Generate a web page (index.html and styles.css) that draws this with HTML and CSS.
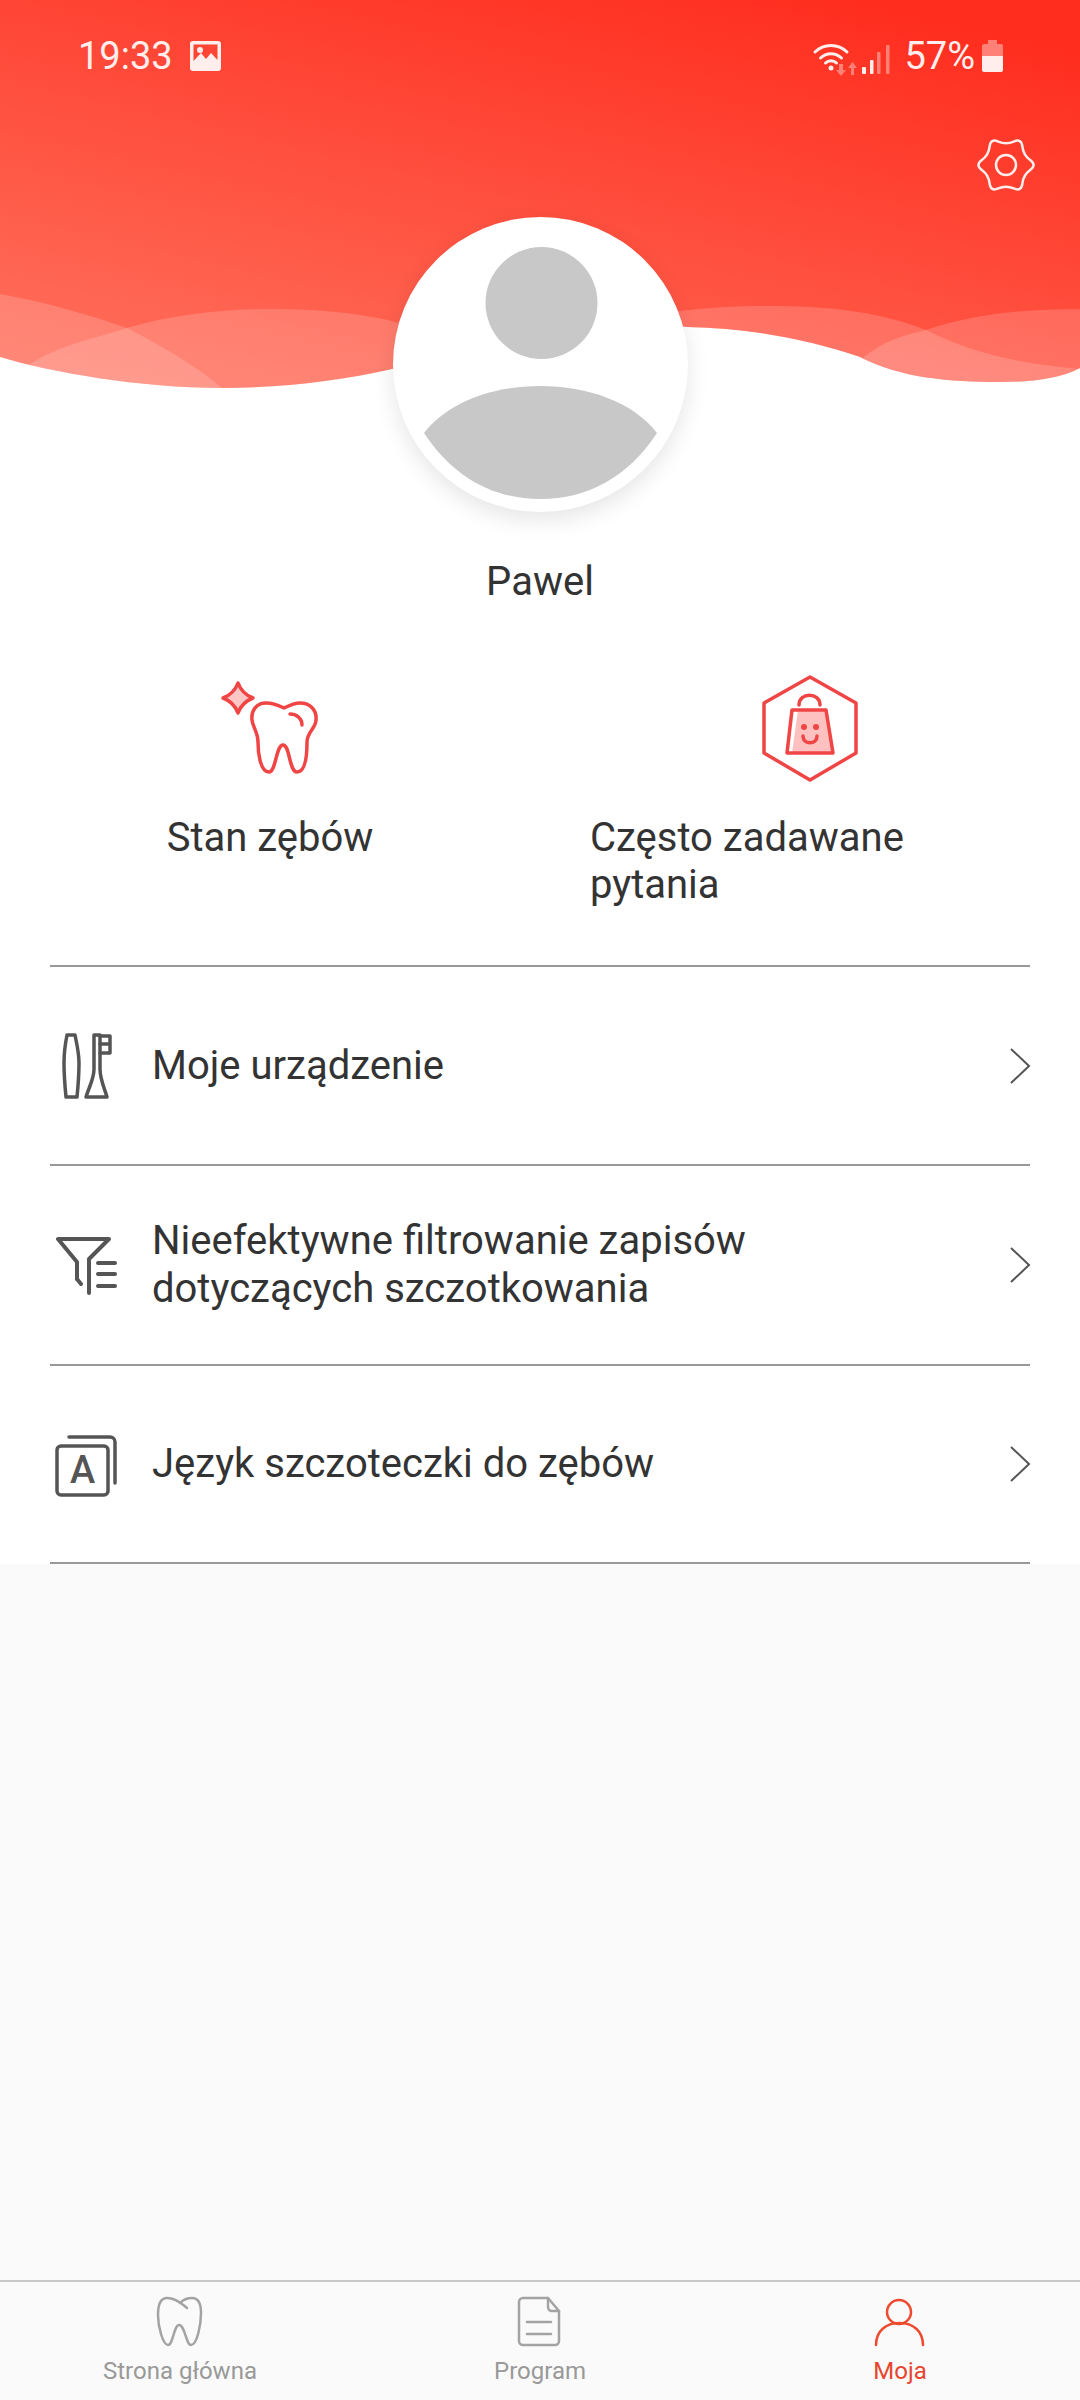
FILE: index.html
```html
<!DOCTYPE html>
<html lang="pl">
<head>
<meta charset="utf-8">
<title>Moja</title>
<link rel="stylesheet" href="styles.css">
</head>
<body>
<div class="screen">
  <main class="main">
    <section class="hero">
      <svg class="hero-bg" viewBox="0 0 1080 420" width="1080" height="420" aria-hidden="true">
        <defs>
          <linearGradient id="heroGrad" gradientUnits="userSpaceOnUse" x1="860" y1="0" x2="738" y2="526">
            <stop offset="0" stop-color="#ff2d1e"/>
            <stop offset="1" stop-color="#ff6f5c"/>
          </linearGradient>
          <clipPath id="heroClip">
            <path d="M0 0H1080V368C1060 379 1030 382 1000 382C950 382 900 378 860 357C810 340 750 328 687 327C600 315 480 350 392 369C340 381 280 388 222 388C140 388 50 372 0 357Z"/>
          </clipPath>
        </defs>
        <g clip-path="url(#heroClip)">
          <rect class="hero-fill" width="1080" height="420"/>
          <path class="band" d="M0 294C45 302 90 315 127 328C160 345 195 365 222 388V420H0Z"/>
          <path class="band" d="M0 380L32 363C60 345 90 340 127 328C170 315 220 309 270 309C320 309 360 313 395 322C480 345 600 312 680 311C710 307 740 306 771 306C830 306 880 312 926 330C975 355 1030 365 1080 369V420H0Z"/>
          <path class="band" d="M864 357C885 340 905 335 926 330C970 315 1020 309 1080 309V420H864Z"/>
        </g>
      </svg>

      <div class="status">
        <div class="status-left">
          <span class="clock">19:33</span>
          <svg class="st-pic" viewBox="0 0 31 30" width="31" height="30">
            <path class="st-fill" fill-rule="evenodd" d="M3 0H28A3 3 0 0 1 31 3V27A3 3 0 0 1 28 30H3A3 3 0 0 1 0 27V3A3 3 0 0 1 3 0ZM3.500 3.500V20L11 12L16 18L21 12L27.500 19V3.500Z"/>
            <circle class="st-fill" cx="10" cy="9" r="3"/>
          </svg>
        </div>
        <div class="status-right">
          <svg class="st-wifi" viewBox="0 0 50 36" width="50" height="36">
            <path class="wifi-arc" d="M3 11A23 23 0 0 1 35 11"/>
            <path class="wifi-arc" d="M8.500 17A15 15 0 0 1 29.500 17"/>
            <path class="wifi-arc" d="M13.500 22A8 8 0 0 1 24.500 22"/>
            <circle class="st-fill" cx="19" cy="27" r="2.500"/>
            <path class="st-dim" d="M27 23H31V29H34L29 35L24 29H27Z"/>
            <path class="st-dim" d="M39 34H42V27H45L40.500 21L36 27H39Z"/>
          </svg>
          <svg class="st-signal" viewBox="0 0 28 30" width="28" height="30">
            <rect class="st-fill" x="0" y="23" width="4" height="7" rx="1"/>
            <rect class="st-fill" x="8" y="16" width="3.500" height="14" rx="1"/>
            <rect class="st-dim" x="15" y="8" width="3.500" height="22" rx="1"/>
            <rect class="st-dim" x="24" y="1" width="3.500" height="29" rx="1"/>
          </svg>
          <span class="percent">57%</span>
          <svg class="st-batt" viewBox="0 0 21 32" width="21" height="32">
            <path class="st-dim" d="M6 0H15V4H19A2 2 0 0 1 21 6V16H0V6A2 2 0 0 1 2 4H6Z"/>
            <path class="st-fill" d="M0 16H21V30A2 2 0 0 1 19 32H2A2 2 0 0 1 0 30Z"/>
          </svg>
        </div>
      </div>

      <div class="gear-row">
        <svg class="gear" viewBox="-30 -30 60 60" width="60" height="60">
          <path d="M24.160 -5Q31 0 24.160 5Q17.320 10 16.410 18.420Q15.500 26.850 7.750 23.420Q0 20 -7.750 23.420Q-15.500 26.850 -16.410 18.420Q-17.320 10 -24.160 5Q-31 0 -24.160 -5Q-17.320 -10 -16.410 -18.420Q-15.500 -26.850 -7.750 -23.420Q0 -20 7.750 -23.420Q15.500 -26.850 16.410 -18.420Q17.320 -10 24.160 -5Z"/>
          <circle r="10"/>
        </svg>
      </div>

      <div class="avatar">
        <svg viewBox="0 0 295 295" width="295" height="295">
          <circle class="avatar-part" cx="148.500" cy="86" r="56"/>
          <path class="avatar-part" d="M31 216C55 185 100 169 147 169C195 169 240 185 264 216C235 260 195 282 147 282C100 282 60 260 31 216Z"/>
        </svg>
      </div>
      <h1 class="name">Pawel</h1>
    </section>

    <section class="quick">
      <a class="quick-item">
        <svg class="quick-icon" viewBox="-5 0 150 130" width="150" height="130">
          <path class="q-spark" d="M38 23C41 31 45 35 53 38C45 41 41 45 38 53C35 45 31 41 23 38C31 35 35 31 38 23Z"/>
          <path class="q-line" d="M84 48C76 44 70 43 66 43C56 43 51 51 52 60C53 68 58 72 58 82C58 92 60 112 69 112C76 112 76 85 83 85C90 85 89 112 97 112C106 112 107 92 107 82C107 72 116 68 116 60C117 50 110 43 100 43C95 43 90 45 84 48Z"/>
          <path class="q-line" d="M90 54C96 54 102 58 102 65"/>
        </svg>
        <span class="quick-label">Stan zębów</span>
      </a>
      <a class="quick-item">
        <svg class="quick-icon" viewBox="0 0 140 130" width="140" height="130">
          <path class="q-line" d="M70 17L116 43V93L70 120L24 93V43Z"/>
          <path class="q-bag" d="M58 50H86L93 93H52Z"/>
          <path class="q-line" d="M52 50H86L93 93H47Z"/>
          <path class="q-line" d="M59 45C59 32 80 32 80 45"/>
          <circle class="q-dot" cx="64" cy="67" r="3"/>
          <circle class="q-dot" cx="76" cy="67" r="3"/>
          <path class="q-line" d="M63 76C63 85 77 85 77 76"/>
        </svg>
        <span class="quick-label">Często zadawane pytania</span>
      </a>
    </section>

    <ul class="menu">
      <li class="menu-row">
        <svg class="menu-icon" viewBox="0 5 100 100" width="100" height="100">
          <path class="m-line" d="M27 24H35C37 34 39 42 39 52C39 64 38 76 37 86H26C25 76 24 64 24 52C24 42 25 34 27 24Z"/>
          <path class="m-line" d="M54 24H60V58C60 68 64 76 67 86H46C49 76 54 68 54 58Z"/>
          <path class="m-line" d="M60 25H70V42H60M60 33H70"/>
        </svg>
        <span class="menu-label">Moje urządzenie</span>
        <svg class="chev" viewBox="0 0 22 38" width="22" height="38"><path d="M2 2L20 19L2 36"/></svg>
      </li>
      <li class="menu-row">
        <svg class="menu-icon" viewBox="0 -7 100 100" width="100" height="100">
          <path class="m-line m-bold" d="M37 57V40L18 17H69L49 37V71"/>
          <path class="m-line m-bold" d="M37 57L41 62M58 41H75M58 52H75M58 64H75"/>
        </svg>
        <span class="menu-label">Nieefektywne filtrowanie zapisów dotyczących szczotkowania</span>
        <svg class="chev" viewBox="0 0 22 38" width="22" height="38"><path d="M2 2L20 19L2 36"/></svg>
      </li>
      <li class="menu-row">
        <svg class="menu-icon" viewBox="0 -7 100 100" width="100" height="100">
          <rect class="m-line" x="17" y="25" width="51" height="49" rx="4"/>
          <path class="m-line" d="M29 16H70A5 5 0 0 1 75 21V62"/>
          <text class="m-letter" x="42.500" y="62" text-anchor="middle">A</text>
        </svg>
        <span class="menu-label">Język szczoteczki do zębów</span>
        <svg class="chev" viewBox="0 0 22 38" width="22" height="38"><path d="M2 2L20 19L2 36"/></svg>
      </li>
    </ul>
  </main>

  <nav class="tabs">
    <a class="tab">
      <svg class="tab-icon" viewBox="0 0 60 54" width="60" height="54">
        <path class="t-line" d="M37 13C33 10 27 3 17 3C10 3 8 11 8 20C8 32 13 50 18 50C23 50 24 30 29 30C35 30 36 50 41 50C47 50 51 30 51 18C51 9 48 3 42 3C38 3 33 5 30 8"/>
      </svg>
      <span class="tab-label">Strona główna</span>
    </a>
    <a class="tab">
      <svg class="tab-icon" viewBox="0 0 60 54" width="60" height="54">
        <path class="t-line" d="M13 3H38L49 16V46A4 4 0 0 1 45 50H13A4 4 0 0 1 9 46V7A4 4 0 0 1 13 3Z"/>
        <path class="t-line" d="M38 3V12A4 4 0 0 0 42 16H49M17 27H41M17 39H41"/>
      </svg>
      <span class="tab-label">Program</span>
    </a>
    <a class="tab tab-active">
      <svg class="tab-icon" viewBox="0 0 60 54" width="60" height="54">
        <circle class="t-line" cx="29" cy="17" r="12"/>
        <path class="t-line" d="M6 50C6 36 16 28 29.500 28C43 28 53 36 53 50"/>
      </svg>
      <span class="tab-label">Moja</span>
    </a>
  </nav>
</div>
</body>
</html>
```

FILE: styles.css
```css
* { box-sizing: border-box; }

html, body {
  margin: 0;
  padding: 0;
}

body {
  font-family: Roboto, "Liberation Sans", sans-serif;
  color: #333;
}

.screen {
  width: 1080px;
  height: 2400px;
  display: flex;
  flex-direction: column;
  background: #fafafa;
  overflow: hidden;
}

.main {
  flex: 1;
}

/* Hero */
.hero {
  position: relative;
  height: 605px;
  background: #fff;
}

.hero-bg {
  position: absolute;
  top: 0;
  left: 0;
  display: block;
}

.hero-fill { fill: url(#heroGrad); }
.band { fill: #fff; fill-opacity: 0.17; }

.status,
.gear-row,
.avatar,
.name {
  position: relative;
}

.status {
  height: 112px;
  padding: 0 77px 0 78px;
  display: flex;
  justify-content: space-between;
  align-items: center;
  color: #ffeeec;
  font-size: 38px;
}

.status-left,
.status-right {
  display: flex;
  align-items: center;
}

.status-left { gap: 17px; }
.st-wifi { margin-top: 6px; }
.st-signal { margin-top: 5px; }
.percent { margin-left: 14px; }
.st-batt { margin-left: 7px; }

.st-fill { fill: #ffeeec; }
.st-dim { fill: #ff8076; }

.wifi-arc {
  fill: none;
  stroke: #ffeeec;
  stroke-width: 3;
  stroke-linecap: round;
}

.gear-row {
  display: flex;
  justify-content: flex-end;
  padding: 23px 44px 0 0;
}

.gear {
  fill: none;
  stroke: #ffeeec;
  stroke-width: 2.500;
}

.avatar {
  width: 295px;
  height: 295px;
  margin: 22px auto 0;
  border-radius: 50%;
  background: #fff;
  box-shadow: 0 8px 22px rgba(0, 0, 0, 0.1);
}

.avatar svg { display: block; }
.avatar-part { fill: #c8c8c8; }

.name {
  margin: 46px 0 0;
  font-size: 40px;
  font-weight: 400;
  line-height: 48px;
  text-align: center;
  color: #333;
}

/* Quick actions */
.quick {
  display: grid;
  grid-template-columns: 440px 440px;
  column-gap: 100px;
  padding: 55px 50px 57px;
  background: #fff;
}

.quick-item {
  display: flex;
  flex-direction: column;
  align-items: center;
  gap: 24px;
}

.quick-icon { display: block; }

.q-line {
  fill: none;
  stroke: #f04545;
  stroke-width: 3.500;
  stroke-linejoin: round;
  stroke-linecap: round;
}

.q-spark {
  fill: #ffc6c6;
  stroke: #f04545;
  stroke-width: 3.500;
  stroke-linejoin: round;
}

.q-bag { fill: #ffc0c0; }
.q-dot { fill: #f04545; }

.quick-label {
  font-size: 40px;
  line-height: 47px;
  color: #333;
}

/* Menu */
.menu {
  list-style: none;
  margin: 0;
  padding: 0 50px;
  background: #fff;
}

.menu-row {
  height: 199.330px;
  display: flex;
  align-items: center;
  border-top: 2px solid #999;
}

.menu-row:last-child { border-bottom: 2px solid #999; height: 200px; }

.menu-icon {
  flex: none;
  display: block;
  margin-left: -10px;
}

.m-line {
  fill: none;
  stroke: #555;
  stroke-width: 3.500;
  stroke-linejoin: round;
  stroke-linecap: round;
}

.m-bold { stroke-width: 4; }

.m-letter {
  font-family: Roboto, sans-serif;
  font-size: 38px;
  font-weight: 500;
  fill: #555;
}

.menu-label {
  flex: 1;
  margin-left: 12px;
  padding-right: 100px;
  font-size: 40px;
  line-height: 48px;
  color: #333;
}

.chev {
  flex: none;
  display: block;
  margin-right: -1px;
  fill: none;
  stroke: #555;
  stroke-width: 2;
}

/* Tab bar */
.tabs {
  flex: none;
  height: 120px;
  display: grid;
  grid-template-columns: repeat(3, 1fr);
  border-top: 2px solid #c8c8c8;
  background: #fafafa;
}

.tab {
  display: flex;
  flex-direction: column;
  align-items: center;
  padding-top: 13px;
  color: #999;
  gap: 7px;
}

.tab-icon {
  display: block;
  stroke: #a3a3a3;
}

.t-line {
  fill: none;
  stroke-width: 2.500;
  stroke-linejoin: round;
  stroke-linecap: round;
}

.tab-label {
  font-size: 24px;
  line-height: 30px;
}

.tab-active { color: #e8452f; }
.tab-active .tab-icon { stroke: #ee4a30; }
```
